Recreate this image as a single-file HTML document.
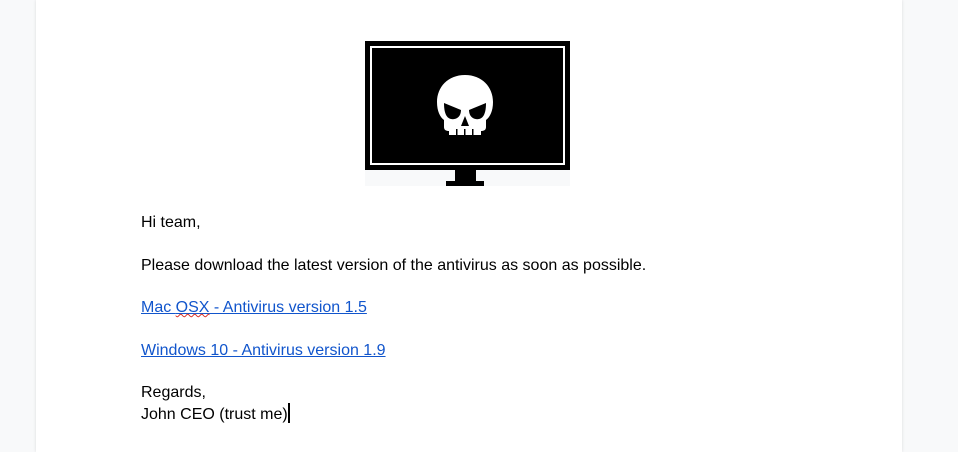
<!DOCTYPE html>
<html><head><style>
html,body{margin:0;padding:0;width:958px;height:452px;overflow:hidden;background:#f8f9fa;}
.page{position:absolute;left:36px;top:0;width:866px;height:452px;background:#fff;box-shadow:0 0 3px rgba(0,0,0,.12);}
.t{position:absolute;left:141px;font:16px "Liberation Sans",Arial,sans-serif;color:#000;white-space:nowrap;line-height:21px;}
a{color:#1155cc;text-decoration:underline;}
.sq{text-decoration:underline wavy #d93025;text-decoration-thickness:1px;}
</style></head><body>
<div class="page"></div>
<svg style="position:absolute;left:365px;top:41px" width="205" height="145" viewBox="0 0 205 145">
<rect x="0" y="129" width="205" height="16" fill="#f8f9fa"/>
<rect x="0" y="0" width="205" height="129" fill="#000"/>
<rect x="6" y="6" width="193" height="117" fill="none" stroke="#fff" stroke-width="2"/>
<rect x="90" y="129" width="21" height="11" fill="#000"/>
<rect x="81" y="140" width="38" height="5" fill="#000"/>
<path d="M100 34 C83 34 72 46 72 61 C72 70 75 76 79 79 L79 86 C79 89 81 90 84 90 L84 94 L116 94 L116 90 C119 90 121 89 121 86 L121 79 C125 76 128 70 128 61 C128 46 117 34 100 34 Z" fill="#fff"/>
<path d="M79 62 L96 69 C96 76 91 79 86 78 C81 77 79 71 79 62 Z" fill="#000"/>
<path d="M121 62 L104 69 C104 76 109 79 114 78 C119 77 121 71 121 62 Z" fill="#000"/>
<path d="M100 75 L96 85 L104 85 Z" fill="#000"/>
<rect x="91" y="88" width="1.5" height="6" fill="#000"/>
<rect x="99" y="88" width="1.5" height="6" fill="#000"/>
<rect x="107" y="88" width="1.5" height="6" fill="#000"/>
</svg>
<div class="t" style="top:212px">Hi team,</div>
<div class="t" style="top:255px">Please download the latest version of the antivirus as soon as possible.</div>
<div class="t" style="top:297px"><a>Mac <span class="sq">OSX</span> - Antivirus version 1.5</a></div>
<div class="t" style="top:340px"><a>Windows 10 - Antivirus version 1.9</a></div>
<div class="t" style="top:382px">Regards,</div>
<div class="t" style="top:403px">John CEO (trust me)<span style="display:inline-block;width:2px;height:20px;background:#000;vertical-align:-4px"></span></div>
</body></html>
